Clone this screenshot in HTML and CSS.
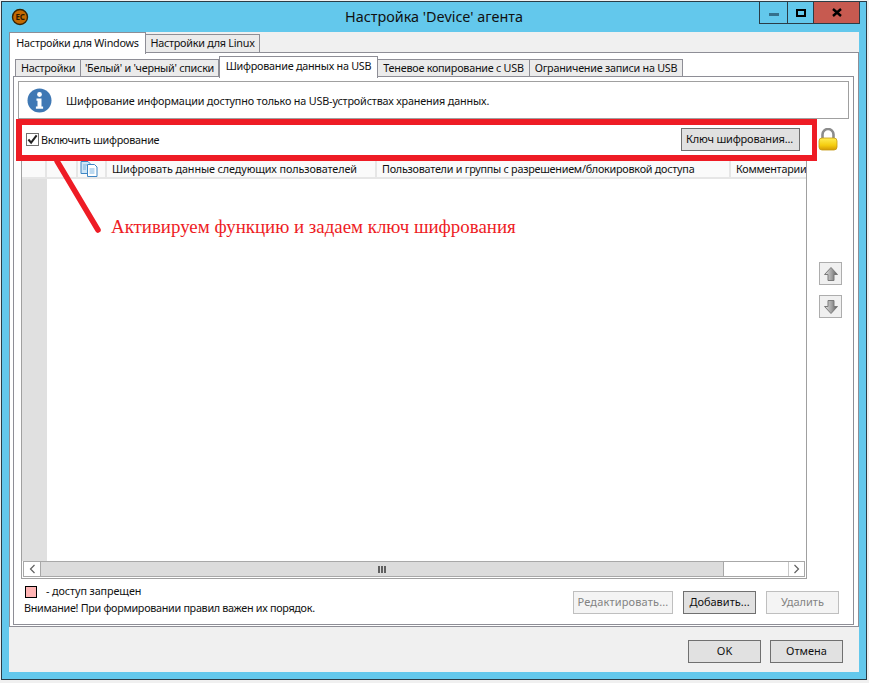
FILE: index.html
```html
<!DOCTYPE html>
<html lang="ru">
<head>
    <meta charset="UTF-8">
    <meta name="viewport" content="width=device-width, initial-scale=1.0">
    <title>Настройка 'Device' агента</title>
    <link rel="stylesheet" href="styles.css">
</head>
<body>
    <div class="window">
        <div class="titlebar">
            <div class="title-left">
                <svg class="app-icon" width="18" height="18" viewBox="0 0 18 18">
                    <circle cx="9" cy="9" r="7.5" fill="#c46a00" stroke="#3a2400" stroke-width="1.4"/>
                    <text x="9" y="12" text-anchor="middle" class="app-icon-text">EC</text>
                </svg>
            </div>
            <div class="title-text">Настройка 'Device' агента</div>
            <div class="title-buttons">
                <div class="title-btn btn-min"><span class="min-glyph"></span></div>
                <div class="title-btn btn-max"><span class="max-glyph"></span></div>
                <div class="title-btn btn-close">
                    <svg width="10" height="9" viewBox="0 0 10 9"><path d="M1 1l8 7M9 1L1 8" stroke="#000" stroke-width="2.4" fill="none"/></svg>
                </div>
            </div>
        </div>

        <div class="panel">
            <div class="tabs outer-tabs">
                <div class="tab outer-tab active">Настройки для Windows</div>
                <div class="tab outer-tab tab-linux">Настройки для Linux</div>
            </div>
            <div class="outer-body">
                <div class="tabs inner-tabs">
                    <div class="tab inner-tab tab-w1">Настройки</div>
                    <div class="tab inner-tab tab-w2">'Белый' и 'черный' списки</div>
                    <div class="tab inner-tab active tab-w3">Шифрование данных на USB</div>
                    <div class="tab inner-tab tab-w4">Теневое копирование с USB</div>
                    <div class="tab inner-tab tab-w5">Ограничение записи на USB</div>
                </div>
                <div class="inner-body">
                    <div class="info-box">
                        <svg width="25" height="25" viewBox="0 0 25 25">
                            <circle cx="12.5" cy="12.5" r="12" fill="#3f78b4"/>
                            <circle cx="12.5" cy="6.5" r="2.4" fill="#fff"/>
                            <path d="M9.5 10.5h5v8h1.6v2.2H8.9v-2.2h1.6v-5.8h-1z" fill="#fff"/>
                        </svg>
                        <span class="info-text">Шифрование информации доступно только на USB-устройствах хранения данных.</span>
                    </div>

                    <div class="toggle-row">
                        <label class="check-label">
                            <span class="checkbox">
                                <svg width="12" height="11" viewBox="0 0 12 11"><path d="M1.5 5.5l3 3.5 6-8" stroke="#222" stroke-width="2.2" fill="none"/></svg>
                            </span>
                            Включить шифрование
                        </label>
                        <div class="btn key-btn">Ключ шифрования...</div>
                        <svg class="lock" width="20" height="23" viewBox="0 0 20 23">
                            <defs>
                                <linearGradient id="lockBody" x1="0" y1="0" x2="0" y2="1">
                                    <stop offset="0" stop-color="#ffee55"/>
                                    <stop offset="0.6" stop-color="#f5cd10"/>
                                    <stop offset="1" stop-color="#d49a05"/>
                                </linearGradient>
                            </defs>
                            <path d="M4.500 11V6.500a5.500 5.500 0 0 1 11 0V11" fill="none" stroke="#8c8c8c" stroke-width="2.6"/>
                            <rect x="1" y="10" width="18" height="12" rx="3" fill="url(#lockBody)" stroke="#c79a10" stroke-width="0.8"/>
                        </svg>
                    </div>

                    <div class="main-row">
                        <div class="table">
                            <div class="table-head">
                                <div class="cell"></div>
                                <div class="cell"></div>
                                <div class="cell icon-cell">
                                    <svg width="18" height="16" viewBox="0 0 18 16">
                                        <path d="M1 .5h7l2 2v10H1z" fill="#cfe6f7" stroke="#3f86c4"/>
                                        <path d="M7.500 3.500h7l2.500 2.500v9.500H7.500z" fill="#fff" stroke="#3f86c4"/>
                                        <path d="M3 4h4M3 6h3M3 8h3M9.500 8h5M9.500 10h5M9.500 12h5" stroke="#7db4e0"/>
                                    </svg>
                                </div>
                                <div class="cell cell-users">Шифровать данные следующих пользователей</div>
                                <div class="cell">Пользователи и группы с разрешением/блокировкой доступа</div>
                                <div class="cell">Комментарии</div>
                            </div>
                            <div class="table-body">
                                <div class="row-gutter"></div>
                            </div>
                            <div class="scrollbar">
                                <div class="scroll-btn">
                                    <svg width="7" height="10" viewBox="0 0 7 10"><path d="M5.500 1L1.500 5l4 4" stroke="#606060" stroke-width="1.2" fill="none"/></svg>
                                </div>
                                <div class="scroll-thumb"><span class="grip"></span></div>
                                <div class="scroll-track"></div>
                                <div class="scroll-btn">
                                    <svg width="7" height="10" viewBox="0 0 7 10"><path d="M1.500 1l4 4-4 4" stroke="#606060" stroke-width="1.2" fill="none"/></svg>
                                </div>
                            </div>
                        </div>
                        <div class="side-buttons">
                            <div class="move-btn">
                                <svg width="16" height="16" viewBox="0 0 16 16">
                                    <defs>
                                        <linearGradient id="arrowFill" x1="0" y1="0" x2="1" y2="0">
                                            <stop offset="0" stop-color="#e4e4e4"/>
                                            <stop offset="0.55" stop-color="#a0a0a0"/>
                                            <stop offset="1" stop-color="#5c5c5c"/>
                                        </linearGradient>
                                    </defs>
                                    <path d="M8 1.500L14.500 8.500H11V14.500H5V8.500H1.500z" fill="url(#arrowFill)" stroke="#7a7a7a"/>
                                </svg>
                            </div>
                            <div class="move-btn">
                                <svg width="16" height="16" viewBox="0 0 16 16">
                                    <path d="M8 14.500L14.500 7.500H11V1.500H5V7.500H1.500z" fill="url(#arrowFill)" stroke="#7a7a7a"/>
                                </svg>
                            </div>
                        </div>
                    </div>

                    <div class="footer-row">
                        <div class="notes">
                            <div class="legend"><span class="swatch"></span><span class="legend-text">- доступ запрещен</span></div>
                            <div class="warning">Внимание! При формировании правил важен их порядок.</div>
                        </div>
                        <div class="actions">
                            <div class="btn btn-edit disabled">Редактировать...</div>
                            <div class="btn btn-add focused">Добавить...</div>
                            <div class="btn btn-del disabled">Удалить</div>
                        </div>
                    </div>

                    <div class="red-frame"></div>
                    <svg class="red-arrow" width="60" height="84" viewBox="0 0 60 84">
                        <path d="M6 3L47 72" stroke="#ee1c25" stroke-width="5.500" stroke-linecap="round" fill="none"/>
                    </svg>
                    <div class="red-note">Активируем функцию и задаем ключ шифрования</div>
                </div>
            </div>
            <div class="dialog-buttons">
                <div class="btn dialog-btn">OK</div>
                <div class="btn dialog-btn">Отмена</div>
            </div>
        </div>
    </div>
</body>
</html>
```

FILE: styles.css
```css
* {
    box-sizing: border-box;
}
html, body {
    margin: 0;
    height: 100%;
}
body {
    background-color: #f0f0f0;
    padding: 1px 0 0 1px;
    font-family: "Noto Sans", sans-serif;
    font-size: 10.8px;
    letter-spacing: -0.25px;
    color: #111;
    overflow: hidden;
}
.window {
    width: 866px;
    height: 679px;
    background-color: #63c8ec;
    border: 1px solid #2a3c46;
    padding: 0 7px 7px 7px;
    display: flex;
    flex-direction: column;
}

/* title bar */
.titlebar {
    height: 30px;
    flex: none;
    display: grid;
    grid-template-columns: 1fr auto 1fr;
    align-items: start;
}
.title-left {
    padding: 6px 0 0 2px;
}
.app-icon {
    display: block;
}
.app-icon-text {
    font-size: 8px;
    font-weight: bold;
    fill: #2c1800;
}
.title-text {
    font-size: 14.4px;
    letter-spacing: 0;
    line-height: 30px;
    color: #111;
}
.title-buttons {
    display: flex;
    justify-content: flex-end;
    margin-right: -1px;
}
.title-btn {
    height: 22px;
    border: 1px solid #2a3c46;
    border-top: none;
    margin-left: -1px;
    display: flex;
    align-items: center;
    justify-content: center;
}
.btn-min {
    width: 29px;
}
.btn-max {
    width: 27px;
}
.btn-close {
    width: 47px;
    background-color: #c75a50;
}
.min-glyph {
    width: 10px;
    height: 3px;
    margin-top: 4px;
    background-color: #35708c;
}
.max-glyph {
    width: 10px;
    height: 8px;
    border: 2px solid #000;
}

/* panel + tabs */
.panel {
    flex: 1;
    background-color: #f0f0f0;
    display: flex;
    flex-direction: column;
    min-height: 0;
}
.tabs {
    display: flex;
    align-items: flex-end;
    flex: none;
}
.tab {
    border: 1px solid #8e8e96;
    border-bottom: none;
    border-left-width: 0;
    background-color: #ebebeb;
    white-space: nowrap;
    text-align: center;
}
.tab:first-child {
    border-left-width: 1px;
}
.tab.active {
    background-color: #fff;
    border-left-width: 1px;
    margin-bottom: -2px;
    position: relative;
    z-index: 1;
}
.outer-tabs {
    height: 20px;
}
.outer-tab {
    height: 18px;
    line-height: 16px;
    width: 114px;
}
.outer-tab.active {
    width: 137px;
    height: 22px;
    line-height: 19px;
}
.outer-body {
    height: 575px;
    flex: none;
    background-color: #fff;
    border: 1px solid #8e8e96;
    padding: 3px 4px 1px 3px;
    display: flex;
    flex-direction: column;
}
.inner-tabs {
    height: 20px;
    margin-left: 2px;
}
.inner-tab {
    height: 17px;
    line-height: 16px;
}
.inner-tab.active {
    height: 22px;
    line-height: 18px;
}
.tab-w1 { width: 66px; }
.tab-w2 { width: 138px; }
.tab-w3 { width: 159px; }
.tab-w4 { width: 152px; }
.tab-w5 { width: 153px; }
.inner-body {
    flex: 1;
    position: relative;
    border: 1px solid #8e8e96;
    padding: 4px 4px 0 4px;
    display: flex;
    flex-direction: column;
    min-height: 0;
}

/* info + toggle */
.info-box {
    height: 38px;
    flex: none;
    border: 1px solid #a0a0a0;
    padding-left: 8px;
    display: flex;
    align-items: center;
    gap: 14px;
}
.info-text {
    letter-spacing: -0.16px;
}
.toggle-row {
    height: 42px;
    flex: none;
    display: flex;
    align-items: center;
    padding-left: 8px;
}
.check-label {
    display: flex;
    align-items: center;
    gap: 2px;
    flex: 1;
    margin-top: -1px;
}
.checkbox {
    width: 13px;
    height: 13px;
    border: 1px solid #707070;
    background-color: #fff;
    display: flex;
    align-items: center;
    justify-content: center;
}
.btn {
    height: 23px;
    line-height: 20px;
    text-align: center;
    font-size: 11px;
    letter-spacing: 0;
    background-color: #e1e1e1;
    border: 1px solid #707070;
}
.key-btn {
    width: 119px;
    letter-spacing: -0.2px;
    margin-top: -1px;
    padding-right: 2px;
}
.lock {
    margin: -1px 11px 0 18px;
    flex: none;
}

/* table */
.main-row {
    height: 418px;
    flex: none;
    display: flex;
    padding-left: 3px;
}
.table {
    width: 786px;
    border: 1px solid #a0a0a0;
    border-top: none;
    display: flex;
    flex-direction: column;
}
.table-head {
    height: 18px;
    flex: none;
    display: grid;
    grid-template-columns: 25px 31px 29px 270px 354px 1fr;
    background-color: #fafafa;
    border-bottom: 2px solid #e6e6e6;
    overflow: hidden;
}
.cell {
    border-right: 2px solid #e6e6e6;
    padding-left: 5px;
    line-height: 15px;
    white-space: nowrap;
    overflow: hidden;
}
.cell:last-child {
    border-right: none;
}
.cell-users {
    letter-spacing: -0.1px;
}
.icon-cell {
    padding: 0 0 0 2px;
}
.table-body {
    flex: 1;
    display: flex;
}
.row-gutter {
    width: 25px;
    background-color: #e0e0e0;
}
.scrollbar {
    height: 16px;
    flex: none;
    margin: 0 1px 1px 1px;
    display: flex;
    border: 1px solid #a8a8a8;
}
.scroll-btn {
    width: 16px;
    flex: none;
    display: flex;
    align-items: center;
    justify-content: center;
}
.scrollbar .scroll-btn:last-child {
    border-left: 1px solid #c8c8c8;
}
.scroll-thumb {
    width: 684px;
    flex: none;
    background-color: #dcdcdc;
    border-left: 1px solid #a8a8a8;
    border-right: 1px solid #a8a8a8;
    display: flex;
    align-items: center;
    justify-content: center;
}
.grip {
    width: 8px;
    height: 7px;
    background: repeating-linear-gradient(90deg, #606060 0 2px, transparent 2px 3px);
}
.scroll-track {
    flex: 1;
}
.side-buttons {
    margin-left: 12px;
    padding-top: 101px;
    display: flex;
    flex-direction: column;
    gap: 10px;
}
.move-btn {
    width: 23px;
    height: 23px;
    border: 1px solid #adadad;
    background-color: #f0f0f0;
    display: flex;
    align-items: center;
    justify-content: center;
}

/* bottom part */
.footer-row {
    display: flex;
    justify-content: space-between;
    padding: 7px 10px 0 6px;
}
.legend {
    display: flex;
    align-items: center;
    gap: 9px;
    height: 12px;
    margin-left: 1px;
    letter-spacing: -0.1px;
}
.legend-text {
    margin-top: -3px;
}
.swatch {
    width: 12px;
    height: 12px;
    background-color: #ffb4b4;
    border: 1px solid #000;
}
.warning {
    margin-top: 2px;
    line-height: 15px;
    letter-spacing: -0.3px;
}
.actions {
    display: flex;
    gap: 10px;
    padding-top: 5px;
}
.btn-edit {
    width: 100px;
    letter-spacing: 0.15px;
}
.btn-add,
.btn-del,
.dialog-btn {
    width: 73px;
}
.btn.disabled {
    background-color: #f4f4f4;
    border-color: #bfbfbf;
    color: #838383;
}
.dialog-buttons {
    display: flex;
    justify-content: flex-end;
    gap: 9px;
    padding: 13px 16px 0 0;
}

/* red annotation drawn over the dialog */
.red-frame {
    position: absolute;
    left: 2px;
    top: 42px;
    width: 801px;
    height: 42px;
    border: 6px solid #ee1c25;
    border-right-width: 5px;
}
.red-arrow {
    position: absolute;
    left: 37px;
    top: 81px;
}
.red-note {
    position: absolute;
    left: 97px;
    top: 139px;
    font-family: "Liberation Serif", serif;
    font-size: 18.9px;
    letter-spacing: 0;
    line-height: 22px;
    color: #ee1c25;
    white-space: nowrap;
}
```
